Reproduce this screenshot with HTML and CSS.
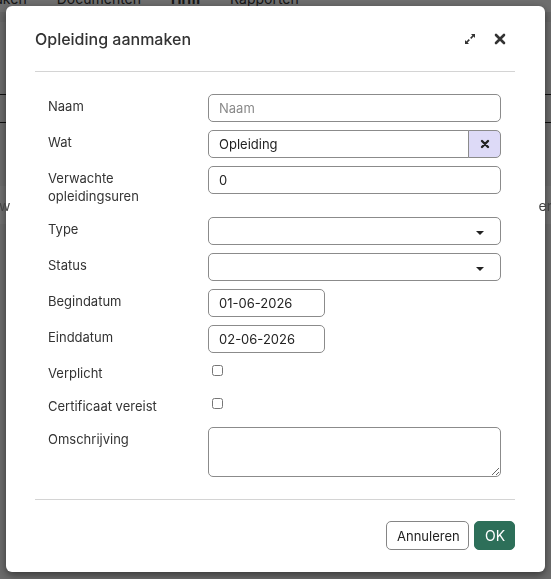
FILE: index.html
```html
<!DOCTYPE html>
<html lang="nl">
<head>
<meta charset="utf-8">
<title>Opleiding aanmaken</title>
<link rel="stylesheet" href="styles.css">
</head>
<body>
<div class="page">
  <nav class="topnav">
    <span class="navlink cut">Taken</span>
    <span class="navlink">Documenten</span>
    <span class="navlink bold">Hrm</span>
    <span class="navlink">Rapporten</span>
  </nav>
  <div class="band"></div>
  <div class="tablehead"></div>
  <div class="tablerow"><span class="cell cell-left">w</span><span class="cell cell-right">er</span></div>
</div>
<div class="backdrop"></div>
<div class="modal" role="dialog">
  <header class="modal-header">
    <h1 class="modal-title">Opleiding aanmaken</h1>
    <div class="header-tools">
      <button class="tool" aria-label="Vergroten">
        <svg width="12" height="12" viewBox="0 0 12 12"><path d="M7 1h4v4l-1.4-1.4-2.3 2.3-1.2-1.2 2.3-2.3z M5 11H1V7l1.4 1.4 2.3-2.3 1.2 1.2-2.3 2.3z" fill="#333"/></svg>
      </button>
      <button class="tool" aria-label="Sluiten">
        <svg width="12" height="12" viewBox="0 0 12 12"><path d="M2 2l8 8M10 2l-8 8" stroke="#333" stroke-width="2.6" stroke-linecap="round"/></svg>
      </button>
    </div>
  </header>
  <div class="modal-body">
    <div class="row">
      <label class="lbl">Naam</label>
      <div class="field"><input class="inp" type="text" placeholder="Naam"></div>
    </div>
    <div class="row">
      <label class="lbl">Wat</label>
      <div class="field">
        <div class="group">
          <input class="inp grp-inp" type="text" value="Opleiding">
          <span class="clear"><svg width="10" height="10" viewBox="0 0 10 10"><path d="M2 2l6 6M8 2l-6 6" stroke="#222" stroke-width="2.4" stroke-linecap="round"/></svg></span>
        </div>
      </div>
    </div>
    <div class="row">
      <label class="lbl">Verwachte opleidingsuren</label>
      <div class="field"><input class="inp" type="text" value="0"></div>
    </div>
    <div class="row">
      <label class="lbl">Type</label>
      <div class="field"><div class="inp select"><span class="caret"></span></div></div>
    </div>
    <div class="row">
      <label class="lbl">Status</label>
      <div class="field"><div class="inp select"><span class="caret"></span></div></div>
    </div>
    <div class="row">
      <label class="lbl">Begindatum</label>
      <div class="field"><input class="inp date" type="text" value="01-06-2026"></div>
    </div>
    <div class="row">
      <label class="lbl">Einddatum</label>
      <div class="field"><input class="inp date" type="text" value="02-06-2026"></div>
    </div>
    <div class="row">
      <label class="lbl">Verplicht</label>
      <div class="field"><input class="chk" type="checkbox"></div>
    </div>
    <div class="row">
      <label class="lbl">Certificaat vereist</label>
      <div class="field"><input class="chk" type="checkbox"></div>
    </div>
    <div class="row">
      <label class="lbl">Omschrijving</label>
      <div class="field"><textarea class="inp area"></textarea></div>
    </div>
  </div>
  <footer class="modal-footer">
    <button class="btn btn-cancel">Annuleren</button>
    <button class="btn btn-ok">OK</button>
  </footer>
</div>
</body>
</html>
```
FILE: styles.css
```css
* { box-sizing: border-box; }
html, body { margin: 0; padding: 0; }
body {
  width: 551px;
  height: 579px;
  overflow: hidden;
  font-family: Inter, "Noto Sans", sans-serif;
  background: #f4f4f4;
  color: #333;
}
.page { position: relative; height: 579px; }
.topnav {
  display: flex;
  gap: 30px;
  height: 22px;
  margin-top: -10px;
  font-size: 14px;
  line-height: 18px;
  color: #333;
  background: #fafafa;
}
.navlink.cut { margin-left: -13px; }
.navlink.bold { font-weight: 700; }
.band { height: 10px; background: #eaeaea; }
.tablehead {
  margin-top: 72px;
  height: 29px;
  border-top: 1px solid #222;
  border-bottom: 1px solid #222;
}
.tablerow {
  display: flex;
  justify-content: space-between;
  margin-top: 63px;
  height: 38px;
  background: #fff;
  align-items: center;
  font-size: 14px;
  color: #333;
}
.cell { position: relative; z-index: 3; color: #444; }
.cell-left { margin-left: -1px; }
.cell-right { margin-right: -1px; }
.backdrop {
  position: fixed;
  inset: 0;
  background: rgba(0, 0, 0, 0.56);
}
.modal {
  position: fixed;
  top: 6px;
  left: 6px;
  width: 539px;
  height: 566px;
  background: #fff;
  border-radius: 6px;
  box-shadow: 0 3px 8px rgba(0, 0, 0, 0.5);
  padding: 0 30px 0 29px;
  display: flex;
  flex-direction: column;
}
.modal-header {
  display: flex;
  align-items: center;
  justify-content: space-between;
  height: 66px;
  border-bottom: 1px solid #d4d4d4;
}
.modal-title {
  margin: 0;
  font-size: 16px;
  font-weight: 500;
  color: #333;
}
.header-tools { display: flex; gap: 18px; margin-right: 9px; }
.tool {
  border: 0;
  background: none;
  padding: 0;
  width: 12px;
  height: 12px;
  display: flex;
}
.modal-body {
  padding: 22px 14px 22px 13px;
  display: flex;
  flex-direction: column;
  gap: 8px;
  border-bottom: 1px solid #d4d4d4;
}
.row { display: flex; }
.lbl {
  width: 160px;
  flex: none;
  font-size: 13px;
  line-height: 18px;
  padding: 3px 30px 4px 0;
  color: #333;
}
.field { flex: 1; }
.inp {
  display: block;
  width: 100%;
  height: 28px;
  border: 1px solid #8b8b8b;
  border-radius: 5px;
  padding: 0 10px;
  font-family: Inter, "Noto Sans", sans-serif;
  font-size: 13px;
  color: #222;
  background: #fff;
}
.inp::placeholder { color: #8a8a8a; }
.group { display: flex; }
.grp-inp { border-radius: 5px 0 0 5px; flex: 1; }
.clear {
  width: 33px;
  height: 28px;
  flex: none;
  background: #dddaf7;
  border: 1px solid #8b8b8b;
  margin-left: -1px;
  border-radius: 0 5px 5px 0;
  display: flex;
  align-items: center;
  justify-content: center;
}
.select { position: relative; }
.caret {
  position: absolute;
  right: 16px;
  top: 13px;
  width: 0;
  height: 0;
  border-left: 4px solid transparent;
  border-right: 4px solid transparent;
  border-top: 4px solid #222;
}
.date { width: 117px; }
.chk {
  width: 11px;
  height: 11px;
  margin: 4px 0 0 4px;
  display: block;
}
.area { height: 50px; resize: vertical; }
.modal-footer {
  display: flex;
  justify-content: flex-end;
  gap: 5px;
  padding-top: 21px;
}
.btn {
  height: 29px;
  border-radius: 5px;
  font-family: Inter, "Noto Sans", sans-serif;
  font-size: 13px;
  padding: 0 10px;
}
.btn-cancel { background: #fff; border: 1px solid #858585; color: #222; width: 83px; }
.btn-ok { background: #2d6f59; border: 1px solid #2d6f59; color: #fff; width: 41px; font-size: 14px; }
```
